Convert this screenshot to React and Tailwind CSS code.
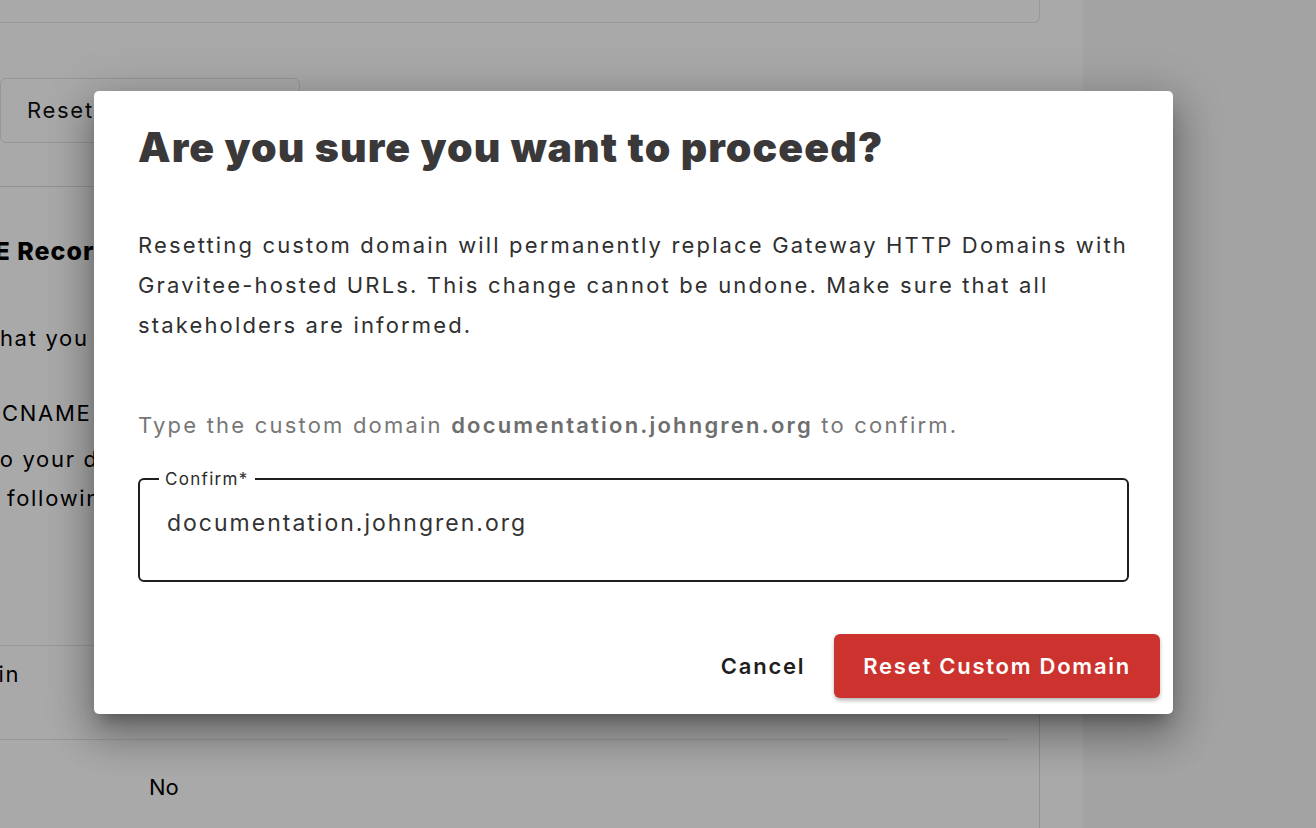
import { useState } from 'react';

// Background page, dimmed by the modal overlay
function BackgroundPage() {
  return (
    <div className="relative min-h-[828px] w-full overflow-hidden bg-white font-['Inter',sans-serif] tracking-[1.7px] text-black">
      <div className="flex">
        <div className="w-[1083px] shrink-0">
          {/* top card, bottom edge only visible */}
          <div className="h-[23px] w-[1040px] rounded-br-md border-r border-b border-[#e5e5e5]" />

          <div className="mt-[55px]">
            <button className="h-[65px] w-[300px] rounded-md border border-[#e2e2e2] pl-[26px] text-left text-[22px] text-[#111]">
              Reset Custom Domain
            </button>
          </div>

          {/* main card */}
          <div className="mt-[43px] w-[1040px] border-t border-r border-[#dcdcdc] pr-[30px]">
            <div className="pt-[46px]">
              <h2 className="-ml-[90px] whitespace-nowrap text-[25px] font-extrabold tracking-[1px]">CNAME Records</h2>
              <p className="-ml-[9px] mt-[51px] whitespace-nowrap text-[22px]">that you own the domain</p>
              <p className="ml-[2px] mt-[42px] whitespace-nowrap text-[22px]">CNAME record</p>
              <p className="-ml-[9px] mt-[13px] whitespace-nowrap text-[22px]">to your domain</p>
              <p className="ml-[7px] mt-[6px] whitespace-nowrap text-[22px]">following values</p>
            </div>

            <div className="mt-[130px] border-t border-[#e5e5e5]">
              <div className="-ml-[69px] h-[93px] pt-[12px] text-[22px]">Domain</div>
            </div>
            <div className="border-t border-[#e5e5e5]">
              <div className="h-[100px] pl-[149px] pt-[31px] text-[22px] tracking-normal">No</div>
            </div>
          </div>
        </div>
        <div className="min-h-[828px] flex-1 bg-[#f6f6f6]" />
      </div>
    </div>
  );
}

export default function App() {
  const [value, setValue] = useState('documentation.johngren.org');

  return (
    <div className="relative h-[828px] w-[1316px] overflow-hidden">
      <BackgroundPage />

      {/* overlay */}
      <div className="absolute inset-0 bg-black/[0.337]" />

      {/* dialog */}
      <div className="absolute left-[94px] top-[91px] w-[1079px] rounded-[5px] bg-white px-[44px] pb-[16px] pt-[28px] font-['Inter',sans-serif] tracking-[1.75px] shadow-[0_11px_15px_-7px_rgba(0,0,0,0.3),0_24px_38px_3px_rgba(0,0,0,0.2),0_9px_46px_8px_rgba(0,0,0,0.18)]">
        <h1 className="text-[41px] font-black leading-[56px] tracking-[1.1px] text-[#3a3839]">
          Are you sure you want to proceed?
        </h1>

        <p className="mt-[50px] text-[22px] leading-[40px] tracking-[2.15px] text-[#2f2f2f]">
          Resetting custom domain will permanently replace Gateway HTTP Domains with Gravitee-hosted URLs. This change cannot be undone. Make sure that all stakeholders are informed.
        </p>

        <p className="mt-[60px] text-[22px] leading-[40px] tracking-[2.2px] text-[#777]">
          Type the custom domain <span className="font-semibold text-[#6e6e6e]">documentation.johngren.org</span> to confirm.
        </p>

        <fieldset className="mt-[28px] h-[109px] rounded-[6px] border-2 border-[#1e1e1e] px-[18px]">
          <legend className="ml-[1px] px-[6px] text-[17px] leading-[12px] tracking-[1.3px] text-[#2a2a2a]">Confirm*</legend>
          <input
            className="mt-[22px] w-full bg-transparent pl-[9px] text-[23px] leading-[32px] tracking-[2px] text-[#333] outline-none"
            value={value}
            onChange={(e) => setValue(e.target.value)}
          />
        </fieldset>

        <div className="mt-[52px] flex items-center justify-end gap-[29px]">
          <button className="text-[22px] font-semibold tracking-[1.75px] text-[#1f1f1f]">Cancel</button>
          <button className="-mr-[31px] h-[64px] rounded-[6px] bg-[#cd332e] px-[29px] text-[22px] font-semibold tracking-[1.75px] text-white shadow-[0_3px_5px_-1px_rgba(0,0,0,0.25),0_2px_4px_rgba(0,0,0,0.1)]">
            Reset Custom Domain
          </button>
        </div>
      </div>
    </div>
  );
}
